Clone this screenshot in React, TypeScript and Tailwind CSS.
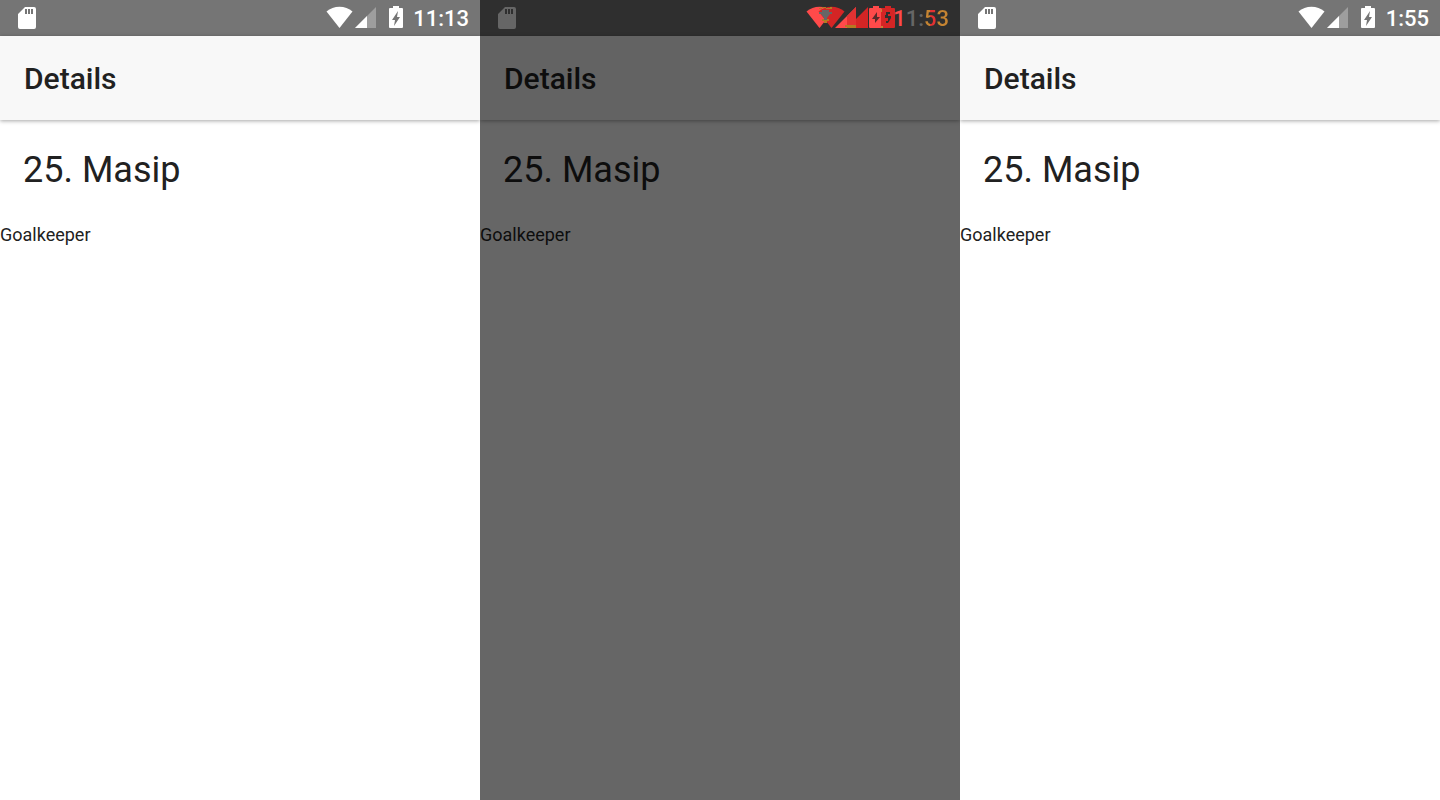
import type { ReactNode } from "react";

const WIFI = "M0.5 11.5C7.5 5.2 19.5 5.2 26.5 11.5L13.5 28Z";
const BATTERY = "M67 6h6v2h3q1 0 1 1v18q0 1-1 1H64q-1 0-1-1V9q0-1 1-1h3Z";
const BOLT = "M72 11l-6 9h3l-1 6 6-9h-3Z";

function SdCard() {
  return (
    <svg className="h-9 w-[18px]" viewBox="0 0 18 36" fill="currentColor" aria-hidden="true">
      <path
        fillRule="evenodd"
        d="M7 7h9q2 0 2 2v18q0 2-2 2H2q-2 0-2-2V14ZM7 9v5h2V9Zm3 0v5h2V9Zm3 0v5h2V9Z"
      />
    </svg>
  );
}

function PhoneIcons() {
  return (
    <svg className="h-9 w-[78px]" viewBox="0 0 78 36" fill="#fff" aria-hidden="true">
      <path d={WIFI} />
      <path d="M50 7v21H29Z" opacity="0.3" />
      <path d="M41 16v12H29Z" />
      <path d={BATTERY} />
      <path d={BOLT} fill="#757575" />
    </svg>
  );
}

function DiffIcons() {
  return (
    <svg className="h-9 w-[87px] overflow-visible" viewBox="0 0 87 36" aria-hidden="true">
      <path d={WIFI} fill="#ff4a4a" />
      <path d={WIFI} fill="#d52525" transform="translate(12 0)" />
      <path d="M13 12h3v-2h7v2h3v2h-2l-3 4v2h-3v-2l-3-4h-2Z" fill="#666" />
      <path d="M13 8h3V7h4v1h-4v1h-3ZM20 8h4V7h2v2h-6ZM16 19h2v1h3v-1h2v2h-2v2h-3v-2h-2Z" fill="#b47a22" />
      <path d="M50 7v21H29Z" fill="#ff4a4a" />
      <path d="M50 19V7l-9 9v12h9Z" fill="#e23232" />
      <path d="M62 7v21H50V19Z" fill="#d52525" />
      <path d="M39 25h11v3h-9v-1h-2Z" fill="#b47a22" />
      <path d={BATTERY} fill="#ff4a4a" />
      <path d="M71 12l-5 7h3v4l5-6h-3v-5Z" fill="#5a2a2a" />
      <path d={BATTERY} fill="#d52525" transform="translate(12 0)" />
      <path d="M80 12h4v2h-2v2h3v2l-3 5h-2v-2h2v-3h-3v-3h1Z" fill="#2f2f2f" />
      <path d="M75 9h1v3h-1ZM75 26h2v2h-2Z" fill="#c58432" />
    </svg>
  );
}

function Clock({ children }: { children: ReactNode }) {
  return <span className="flex pt-px text-[22px] leading-9 font-medium">{children}</span>;
}

function Screen({ diff = false, status }: { diff?: boolean; status: ReactNode }) {
  return (
    <section
      className={
        diff
          ? "min-h-screen overflow-hidden bg-[#666] text-[#0d0d0d]"
          : "min-h-screen overflow-hidden bg-white text-[#212121]"
      }
    >
      <div
        className={
          diff
            ? "flex h-9 justify-between bg-[#2f2f2f] pr-[11px] pl-[18px] text-[#666]"
            : "flex h-9 justify-between bg-[#757575] pr-[11px] pl-[18px] text-white"
        }
      >
        <SdCard />
        <div className="flex">{status}</div>
      </div>
      <header
        className={
          diff
            ? "flex h-[84px] items-center bg-[#636363] px-6 pt-0.5 shadow-[0_1px_4px_rgba(0,0,0,0.35)]"
            : "flex h-[84px] items-center bg-[#f8f8f8] px-6 pt-0.5 shadow-[0_1px_4px_rgba(0,0,0,0.35)]"
        }
      >
        <h1 className="text-[30px] leading-9 font-medium">Details</h1>
      </header>
      <main>
        <h2 className="px-[23px] pt-7 text-4xl leading-[44px]">25. Masip</h2>
        <p className="pt-[31px] text-lg leading-6">Goalkeeper</p>
      </main>
    </section>
  );
}

export default function App() {
  return (
    <div className="grid min-h-screen grid-cols-3 font-[Roboto,sans-serif]">
      <Screen
        status={
          <div className="flex gap-[9px]">
            <PhoneIcons />
            <Clock>11:13</Clock>
          </div>
        }
      />
      <Screen
        diff
        status={
          <>
            <DiffIcons />
            <Clock>
              <span className="text-[#ff4a4a]">1</span>
              <span>1:</span>
              <span className="bg-[linear-gradient(90deg,#c58432_22%,#e23232_26%,#e23232_46%,#c58432_50%)] bg-clip-text text-transparent">
                53
              </span>
            </Clock>
          </>
        }
      />
      <Screen
        status={
          <div className="flex gap-2.5">
            <PhoneIcons />
            <Clock>1:55</Clock>
          </div>
        }
      />
    </div>
  );
}
